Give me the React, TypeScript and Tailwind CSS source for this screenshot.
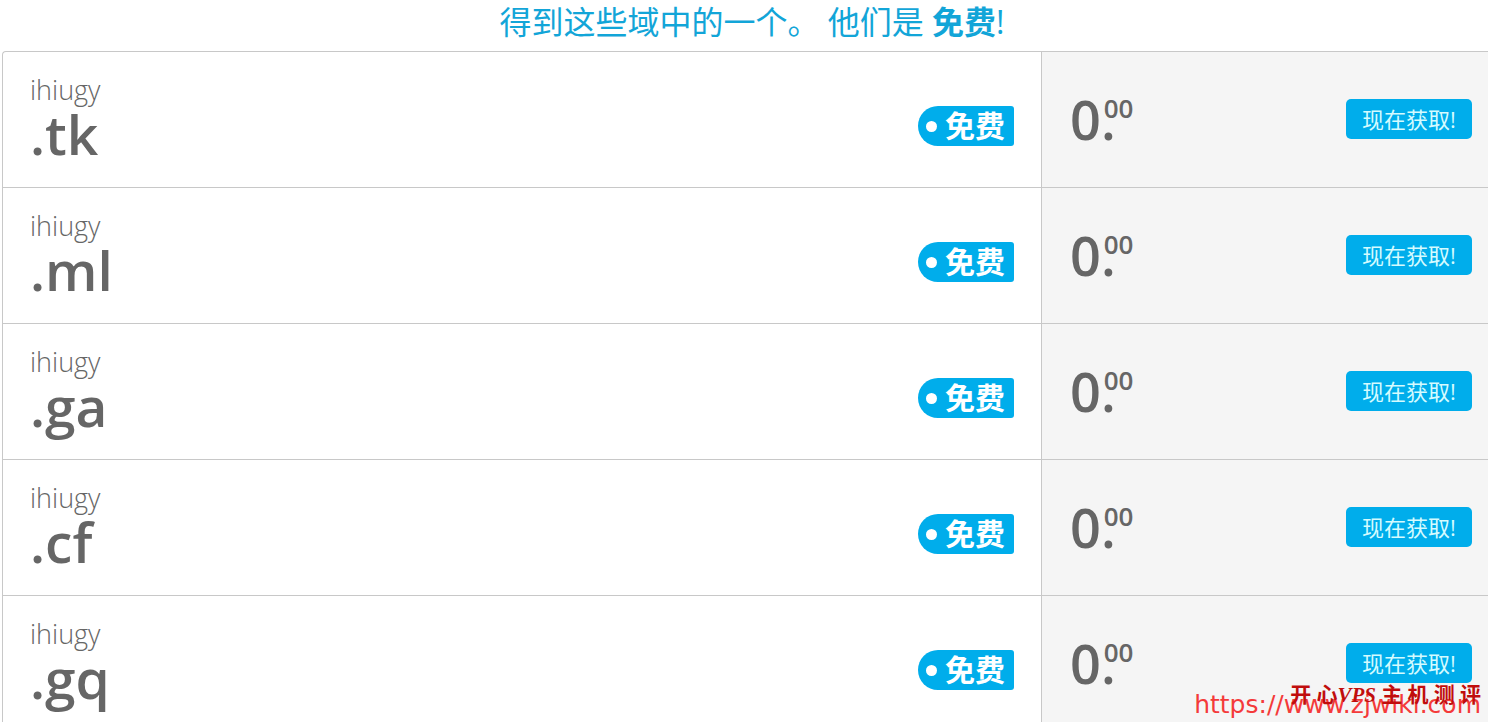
import clsx from "clsx";

type Domain = { name: string; extension: string };

const domains: Domain[] = [
  { name: "ihiugy", extension: ".tk" },
  { name: "ihiugy", extension: ".ml" },
  { name: "ihiugy", extension: ".ga" },
  { name: "ihiugy", extension: ".cf" },
  { name: "ihiugy", extension: ".gq" },
];

const FreeTag = () => (
  <span className="flex h-10 w-24 items-center gap-2 rounded-l-[20px] rounded-r-[3px] bg-[#00adeb] pl-2 text-white">
    <span className="size-[11px] shrink-0 rounded-full bg-white" />
    <span className="text-[30px] leading-10 font-bold whitespace-nowrap">
      免费
    </span>
  </span>
);

const Price = () => (
  <p className="flex items-start font-semibold">
    <span className="text-[54px] leading-[58px]">0.</span>
    <span className="-ml-3 text-[26px] leading-9">00</span>
  </p>
);

type DomainRowProps = { domain: Domain; first: boolean };

const DomainRow = ({ domain, first }: DomainRowProps) => (
  <li
    className={clsx(
      "flex h-34 border-t border-l border-[#c8c8c8]",
      first && "rounded-tl-sm"
    )}
  >
    <div className="flex flex-1 items-start justify-between px-[27px]">
      <h2 className="pt-5">
        <span className="block text-[27px] leading-9 font-light">
          {domain.name}
        </span>
        <span className="block text-[55px] leading-[52px] font-semibold">
          {domain.extension}
        </span>
      </h2>
      <div className="pt-[54px]">
        <FreeTag />
      </div>
    </div>
    <div className="flex w-[447px] items-start justify-between border-l border-[#c8c8c8] bg-[#f5f5f5] pr-4 pl-7">
      <div className="pt-[38px]">
        <Price />
      </div>
      <div className="pt-[47px]">
        <button
          type="button"
          className="h-10 w-[126px] rounded-[5px] bg-[#00adeb] text-[22px] leading-[38px] whitespace-nowrap text-[#d4fbff]"
        >
          现在获取!
        </button>
      </div>
    </div>
  </li>
);

const Watermark = () => (
  <div className="absolute right-[7px] -bottom-px text-right">
    <p className="font-['DejaVu_Sans','Noto_Sans_CJK_SC',sans-serif] text-[25px] leading-9 text-[#f43a3a]">
      https://www.zjwiki.com
    </p>
    <p className="absolute right-0 bottom-3 font-['Liberation_Serif','Noto_Sans_CJK_SC',serif] text-[21px] leading-8 font-bold whitespace-nowrap text-[#c00d0d]">
      开 心<em>VPS</em> 主 机 测 评
    </p>
  </div>
);

export default function App() {
  return (
    <main className="relative h-screen overflow-hidden bg-white font-['Open_Sans','Noto_Sans_CJK_SC',sans-serif] text-[#666]">
      <h1 className="h-[51px] pl-4 text-center text-[32px] leading-[44px] font-normal text-[#12a5d8]">
        得到这些域中的一个。 他们是 <strong>免费</strong>!
      </h1>
      <ul className="ml-[2px]">
        {domains.map((domain, index) => (
          <DomainRow
            key={domain.extension}
            domain={domain}
            first={index === 0}
          />
        ))}
      </ul>
      <Watermark />
    </main>
  );
}
